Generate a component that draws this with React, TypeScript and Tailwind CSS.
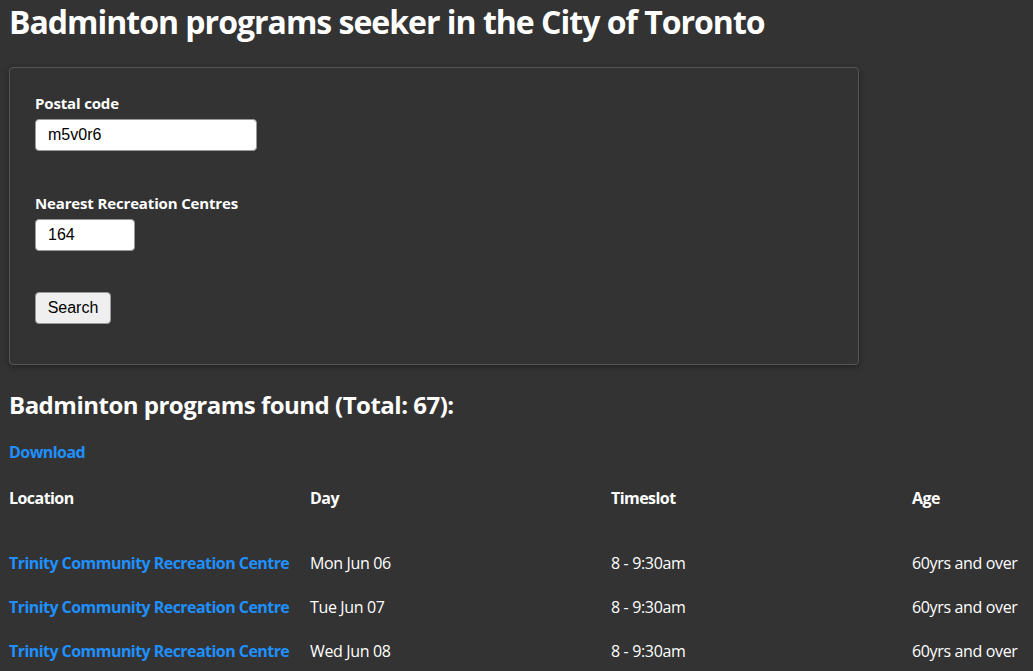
const rows = [
  { location: "Trinity Community Recreation Centre", day: "Mon Jun 06", time: "8 - 9:30am", age: "60yrs and over" },
  { location: "Trinity Community Recreation Centre", day: "Tue Jun 07", time: "8 - 9:30am", age: "60yrs and over" },
  { location: "Trinity Community Recreation Centre", day: "Wed Jun 08", time: "8 - 9:30am", age: "60yrs and over" },
];

const ui = "font-['Open_Sans','Noto_Sans',sans-serif]";
const field = "font-['Liberation_Sans',Arial,sans-serif]";

export default function App() {
  return (
    <div className={`min-h-screen bg-[#333333] text-white px-[9px] ${ui}`}>
      <h1 className="pt-[1px] text-[32px] leading-[42px] font-bold tracking-[-1px]">
        Badminton programs seeker in the City of Toronto
      </h1>

      <form
        className="mt-[24px] w-[850px] rounded border border-[#555555] shadow-[0_2px_6px_rgba(0,0,0,0.35)] px-[25px] pt-[25px] pb-[40px] flex flex-col"
        onSubmit={(e) => e.preventDefault()}
      >
        <label className="text-[15px] leading-[20px] font-bold tracking-[-0.15px]">Postal code</label>
        <input
          defaultValue="m5v0r6"
          className={`mt-[6px] h-[32px] w-[222px] rounded bg-white border border-[#999] px-3 text-[16px] text-black ${field}`}
        />

        <label className="mt-[42px] text-[15px] leading-[20px] font-bold tracking-[-0.15px]">
          Nearest Recreation Centres
        </label>
        <input
          defaultValue="164"
          className={`mt-[6px] h-[32px] w-[100px] rounded bg-white border border-[#999] px-3 text-[16px] text-black ${field}`}
        />

        <div className="mt-[41px]">
          <button
            type="submit"
            className={`h-[32px] w-[76px] rounded bg-[#efefef] border border-[#999] text-[16px] text-black ${field}`}
          >
            Search
          </button>
        </div>
      </form>

      <h2 className="mt-[24px] text-[24px] leading-[32px] font-bold tracking-[-0.5px]">
        Badminton programs found (Total: 67):
      </h2>

      <a href="#" className="block mt-[20px] text-[16px] leading-[22px] font-bold tracking-[-0.55px] text-[#1e90ff]">
        Download
      </a>

      <div className="mt-[24px]">
        <div className="grid grid-cols-[301px_301px_301px_auto] text-[16px] leading-[22px] font-bold tracking-[-0.55px]">
          <div>Location</div>
          <div>Day</div>
          <div>Timeslot</div>
          <div>Age</div>
        </div>
        <div className="mt-[32px]">
          {rows.map((r, i) => (
            <div
              key={i}
              className="grid grid-cols-[301px_301px_301px_auto] h-[44px] items-center text-[16px] tracking-[-0.35px]"
            >
              <a href="#" className="font-bold tracking-[-0.55px] text-[#1e90ff]">{r.location}</a>
              <div>{r.day}</div>
              <div>{r.time}</div>
              <div>{r.age}</div>
            </div>
          ))}
        </div>
      </div>
    </div>
  );
}
